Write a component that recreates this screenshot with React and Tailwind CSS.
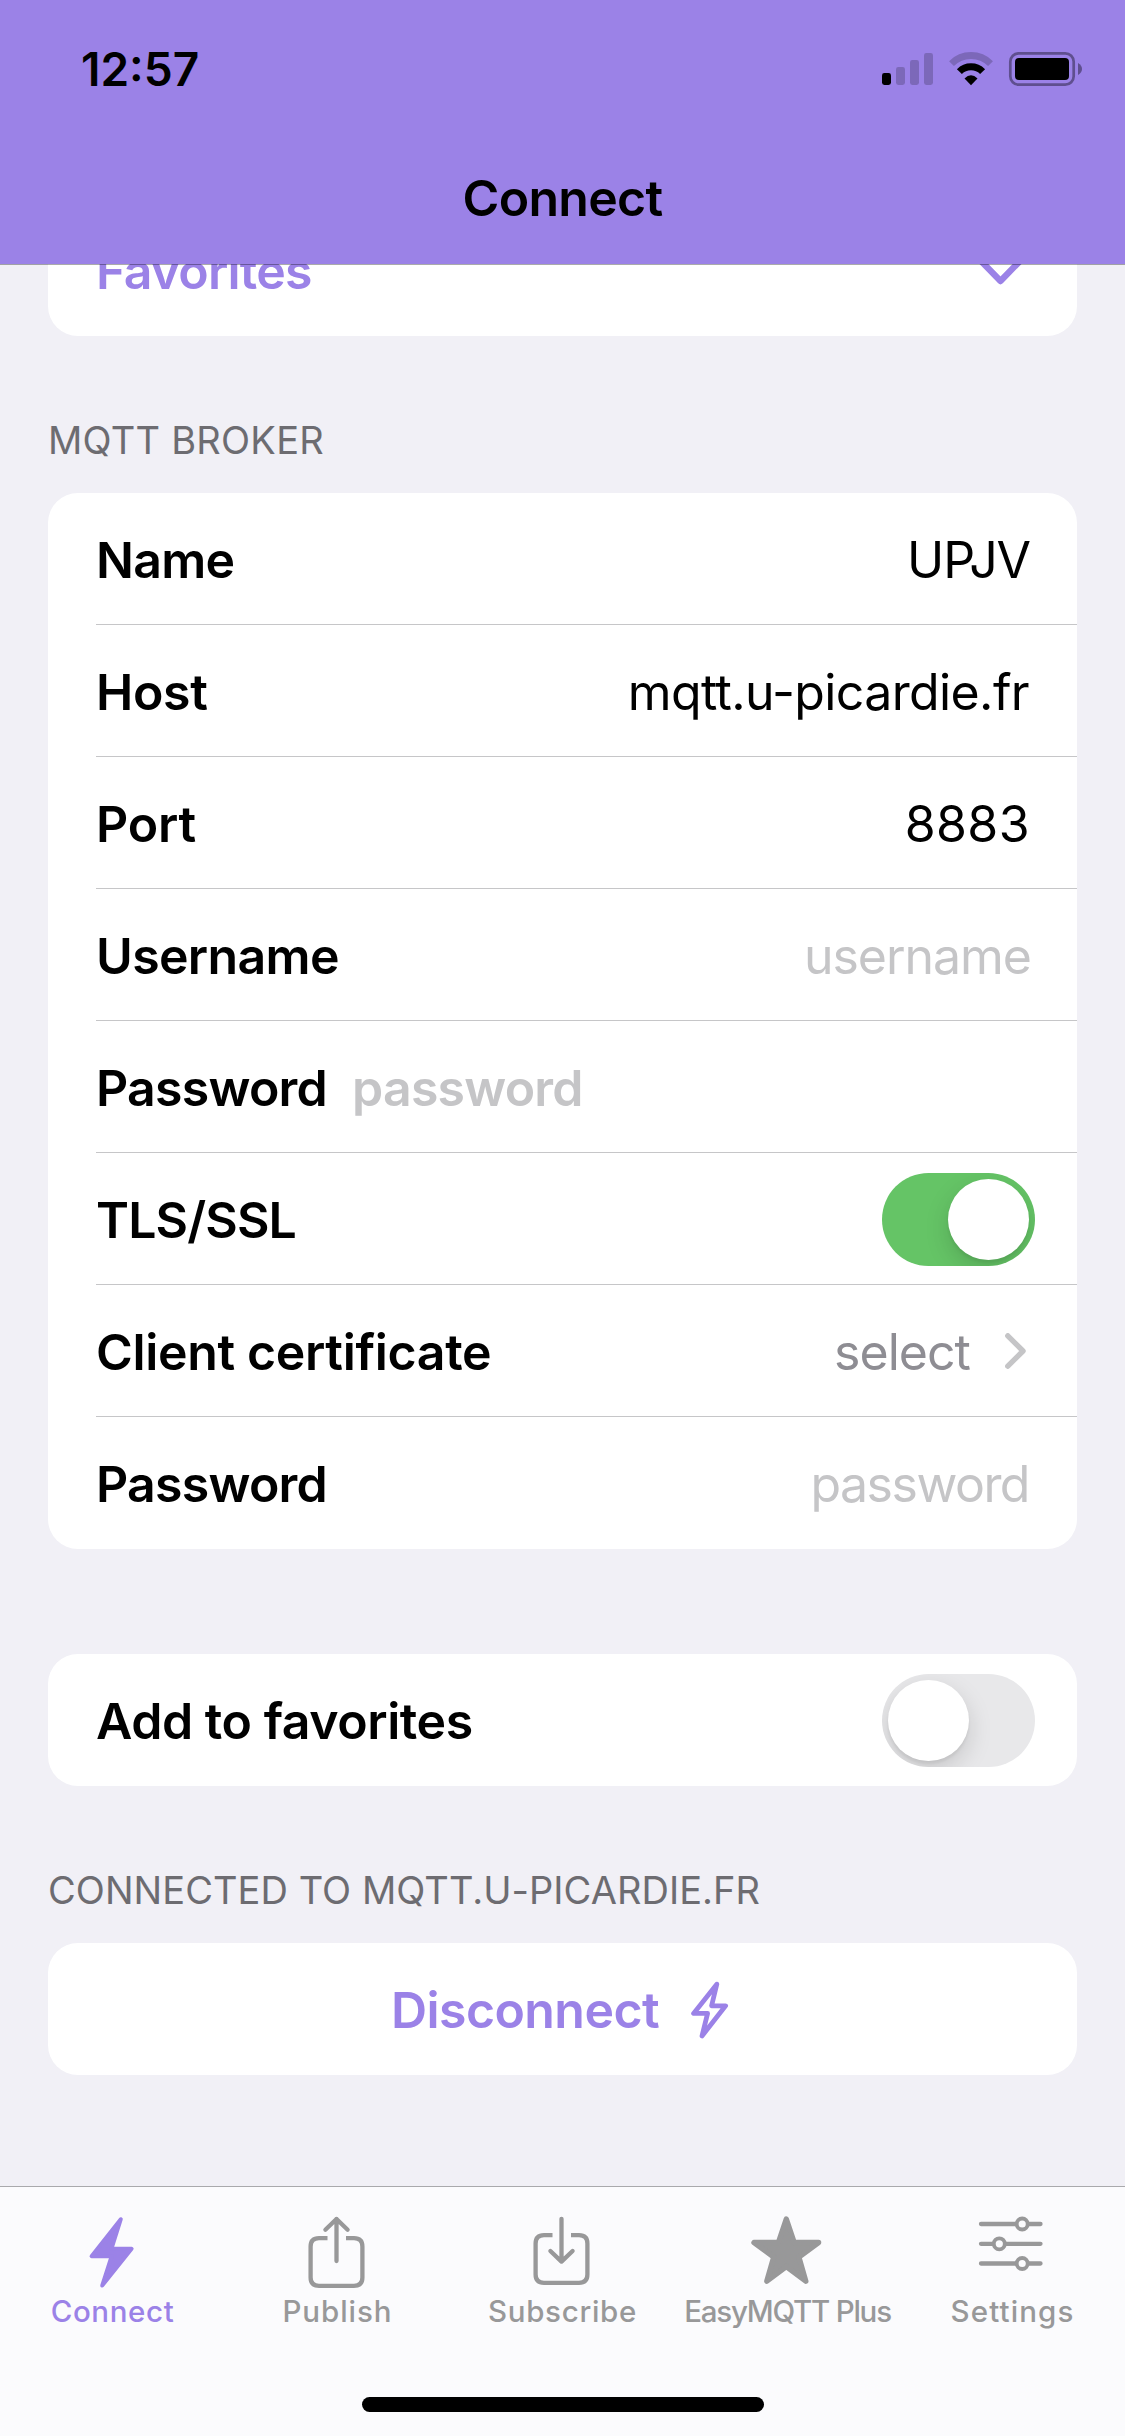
import React from "react";

function StatusIcons() {
  return (
    <svg width="204" height="40" viewBox="880 48 204 40" fill="none" aria-hidden="true">
      <rect x="882" y="73" width="9" height="12" rx="2.4" fill="#000" />
      <g fill="#7c68b9">
        <rect x="896" y="67" width="9" height="18" rx="2.4" />
        <rect x="910" y="60" width="9" height="25" rx="2.4" />
        <rect x="924" y="53" width="9" height="32" rx="2.4" />
      </g>
      <path d="M951.5 63.6A27.5 27.5 0 0 1 990.5 63.6" stroke="#7c68b9" strokeWidth="6.8" />
      <path d="M959.4 71.6A16.4 16.4 0 0 1 982.6 71.6" stroke="#000" strokeWidth="7" />
      <path d="M964.5 78.5Q971 71.8 977.5 78.5L971 85.2Z" fill="#000" />
      <rect x="1010.3" y="53.3" width="63.4" height="31.4" rx="8.5" stroke="#5f4f8f" strokeWidth="2.7" />
      <rect x="1015" y="58" width="54" height="22" rx="4" fill="#000" />
      <path d="M1078 63Q1082 65.5 1082 69T1078 75Z" fill="#5f4f8f" />
    </svg>
  );
}

function Toggle({ on }) {
  return (
    <div
      className={
        "mt-[2px] -mr-[6px] flex h-[93px] w-[153px] items-center overflow-hidden rounded-full p-[6px] " +
        (on ? "justify-end bg-[#65c466]" : "justify-start bg-[#e8e8ea]")
      }
    >
      <div className="size-[81px] rounded-full bg-white shadow-[0_9px_24px_rgba(0,0,0,0.15),0_3px_3px_rgba(0,0,0,0.06)]" />
    </div>
  );
}

function Row({ label, labelClass, last, children }) {
  return (
    <div className="pl-12">
      <div className={"flex h-[132px] items-center border-b pr-12 " + (last ? "border-transparent" : "border-[#c6c6c8]")}>
        <span className={"pt-[2px] font-semibold " + labelClass}>{label}</span>
        {children}
      </div>
    </div>
  );
}

function Value({ className, children }) {
  return <span className={"ml-auto pt-[2px] " + className}>{children}</span>;
}

function SectionTitle({ className, children }) {
  return (
    <h2 className={"flex h-[157px] items-end pb-[30px] text-[38px] leading-[46px] text-[#6d6c71] " + className}>
      {children}
    </h2>
  );
}

function Card({ className = "", children }) {
  return <section className={"overflow-hidden rounded-[30px] bg-white " + className}>{children}</section>;
}

function Tab({ label, className, children }) {
  return (
    <div className={"flex w-[225px] flex-col items-center " + className}>
      <svg width="113" height="72" viewBox="0 0 113 72" fill="none" stroke="currentColor" strokeWidth="4.3" strokeLinecap="round" strokeLinejoin="round" className="overflow-visible" aria-hidden="true">
        {children}
      </svg>
      <span className="mt-[5px] text-[29.5px] leading-[36px] font-medium whitespace-nowrap">{label}</span>
    </div>
  );
}

export default function App() {
  return (
    <div className="flex h-[2436px] w-[1125px] flex-col overflow-hidden bg-[#f1f0f6] font-['Inter','Liberation_Sans',sans-serif] text-[50px] leading-[60px] text-black">
      <header className="relative z-10 flex h-[264px] shrink-0 flex-col bg-[#9b82e7] after:absolute after:top-full after:left-0 after:h-px after:w-full after:bg-black/33">
        <div className="flex h-[136px] items-center justify-between pr-[41px] pl-[81px]">
          <span className="pt-[2px] text-[46px] font-semibold">12:57</span>
          <StatusIcons />
        </div>
        <h1 className="flex flex-1 items-center justify-center pb-1 font-semibold tracking-[-0.69px]">Connect</h1>
      </header>

      <main className="min-h-0 flex-1 overflow-hidden px-12">
        <Card className="-mt-[60px]">
          <Row label="Favorites" labelClass="text-[#9b82e7] tracking-[-0.79px]" last>
            <svg width="46" height="30" viewBox="0 0 46 30" fill="none" stroke="#9b82e7" strokeWidth="6.4" strokeLinecap="round" strokeLinejoin="round" className="mt-1 mr-[6px] ml-auto" aria-hidden="true">
              <path d="M4.5 4.5 23.5 24 42.5 4.5" />
            </svg>
          </Row>
        </Card>

        <SectionTitle className="tracking-[0.25px]">MQTT BROKER</SectionTitle>
        <Card>
          <Row label="Name" labelClass="tracking-[-0.7px]">
            <Value className="-mr-px tracking-[-1.12px]">UPJV</Value>
          </Row>
          <Row label="Host" labelClass="tracking-[-0.3px]">
            <Value className="tracking-[-0.62px]">mqtt.u-picardie.fr</Value>
          </Row>
          <Row label="Port" labelClass="tracking-[-0.2px]">
            <Value className="-mr-px tracking-[0.4px]">8883</Value>
          </Row>
          <Row label="Username" labelClass="tracking-[-0.65px]">
            <Value className="-mr-[2px] tracking-[-1.02px] text-[#c5c5c7]">username</Value>
          </Row>
          <Row label="Password" labelClass="tracking-[-0.75px]">
            <span className="ml-[25px] pt-[2px] font-semibold tracking-[-0.78px] text-[#c5c5c7]">password</span>
          </Row>
          <Row label="TLS/SSL" labelClass="tracking-[-0.86px]">
            <div className="ml-auto">
              <Toggle on />
            </div>
          </Row>
          <Row label="Client certificate" labelClass="tracking-[-0.35px]">
            <Value className="tracking-[-0.97px] text-[#8e8d93]">select</Value>
            <svg width="21" height="36" viewBox="0 0 21 36" fill="none" stroke="#c5c5c7" strokeWidth="5.4" strokeLinecap="round" strokeLinejoin="round" className="mt-px mr-[3px] ml-[35px]" aria-hidden="true">
              <path d="M2.8 2.8 18 18 2.8 33.2" />
            </svg>
          </Row>
          <Row label="Password" labelClass="tracking-[-0.75px]" last>
            <Value className="tracking-[-1.5px] text-[#c5c5c7]">password</Value>
          </Row>
        </Card>

        <Card className="mt-[105px]">
          <Row label="Add to favorites" labelClass="tracking-[-0.44px]" last>
            <div className="ml-auto">
              <Toggle />
            </div>
          </Row>
        </Card>

        <SectionTitle className="tracking-[0.05px]">CONNECTED TO MQTT.U-PICARDIE.FR</SectionTitle>
        <Card className="flex h-[132px] items-center justify-center pr-[5px] text-[#9b82e7]">
          <span className="pt-px font-semibold tracking-[-0.57px]">Disconnect</span>
          <svg width="38" height="58" viewBox="691 1981 38 58" fill="none" stroke="currentColor" strokeWidth="4.8" strokeLinejoin="round" className="mt-[2px] ml-8" aria-hidden="true">
            <path d="M716.8 1984.2 693.6 2013.4H707.6L702 2036 725.6 2005.8H711.6Z" />
          </svg>
        </Card>
      </main>

      <footer className="flex h-[250px] shrink-0 flex-col border-t border-[#a9a9ac] bg-[#fbfbfd]">
        <nav className="flex pt-[29px] text-[#989899]">
          <Tab label="Connect" className="tracking-[0.62px] text-[#9b82e7]">
            <path d="M64.8 3.2 35.6 40.3H55.6L46.2 69.6 75.6 32.8H55.4Z" fill="currentColor" strokeWidth="4" />
          </Tab>
          <Tab label="Publish" className="tracking-[0.95px]">
            <path d="M46.5 22.2H38Q29.6 22.2 29.6 30.6V61.5Q29.6 69.8 38 69.8H73Q81.4 69.8 81.4 61.5V30.6Q81.4 22.2 73 22.2H65" strokeLinecap="butt" />
            <path d="M55.5 3V45M44.4 13.8 55.5 3 66.6 13.8" />
          </Tab>
          <Tab label="Subscribe" className="tracking-[0.7px]">
            <path d="M46.5 19.2H38Q29.6 19.2 29.6 27.6V58.5Q29.6 66.8 38 66.8H73Q81.4 66.8 81.4 58.5V27.6Q81.4 19.2 73 19.2H65" strokeLinecap="butt" />
            <path d="M55.5 2.8V45.4M44.4 35 55.5 45.6 66.6 35" />
          </Tab>
          <Tab label="EasyMQTT Plus" className="tracking-[-1.23px]">
            <path d="M55.3 3 63.2 26.5H87.6L67.9 41.2 74.8 65.2 55.3 50.6 35.8 65.2 42.7 41.2 23 26.5H47.4Z" fill="currentColor" strokeWidth="5.4" />
          </Tab>
          <Tab label="Settings" className="tracking-[1.1px]">
            <path d="M25 8H84.5M25 27.8H84.5M25 47.5H84.5" />
            <g fill="#fbfbfd" strokeWidth="3.8">
              <circle cx="66.2" cy="8" r="5.5" />
              <circle cx="43.3" cy="27.8" r="5.5" />
              <circle cx="66.2" cy="47.5" r="5.5" />
            </g>
          </Tab>
        </nav>
        <div className="mx-auto mt-auto mb-6 h-[15px] w-[402px] rounded-full bg-black" />
      </footer>
    </div>
  );
}
